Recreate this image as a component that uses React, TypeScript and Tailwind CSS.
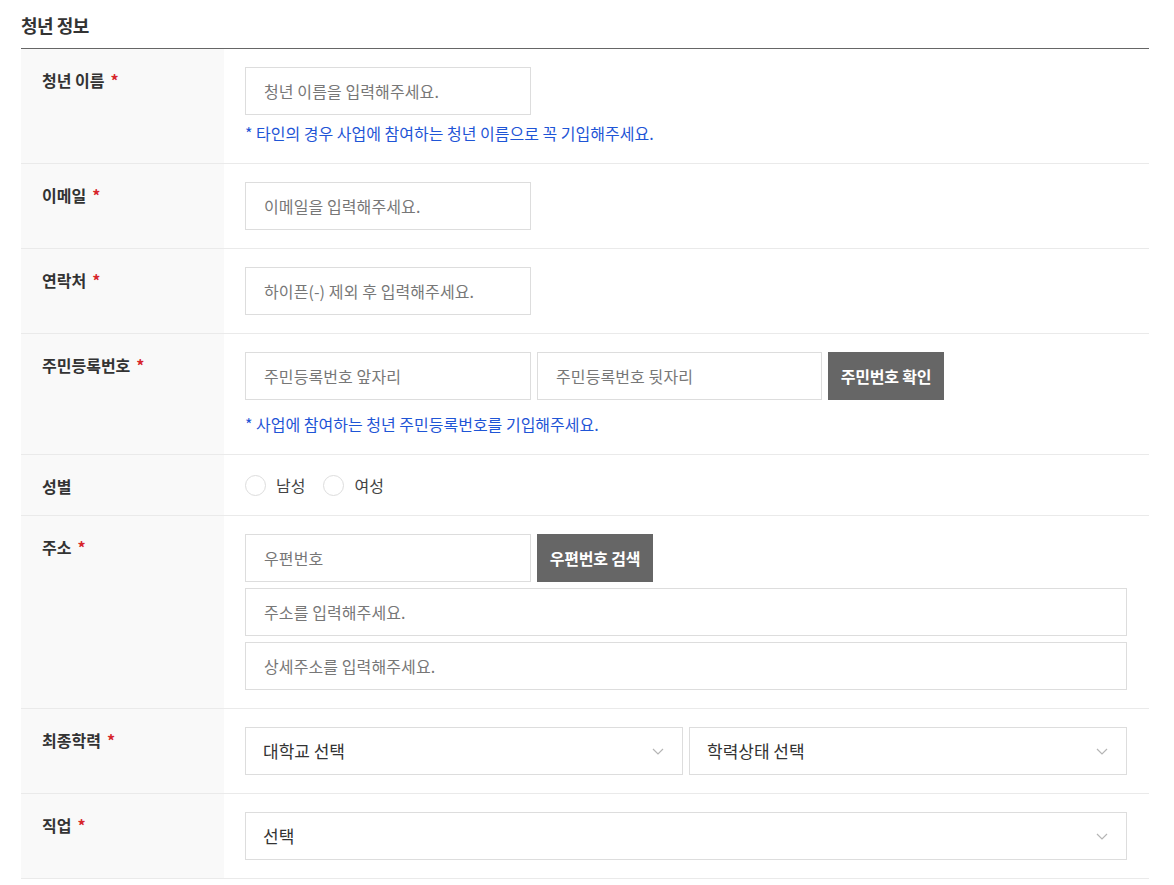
import type { ReactNode } from "react";

const font = { fontFamily: '"Noto Sans CJK KR", "Noto Sans", sans-serif' };

function Row({
  label,
  required,
  children,
}: {
  label: string;
  required?: boolean;
  children: ReactNode;
}) {
  return (
    <div className="flex border-b border-[#eaeaea]">
      <div className="w-[203px] shrink-0 bg-[#f9f9f9] pl-[21px] pt-[18px] text-[16px] font-bold leading-[26px] text-[#333]">
        {label}
        {required && <span className="ml-[6px] text-[#d7262c]">*</span>}
      </div>
      <div className="flex-1 py-[18px] pl-[21px] pr-[22px]">{children}</div>
    </div>
  );
}

function TextInput({ placeholder, className = "w-[286px]" }: { placeholder: string; className?: string }) {
  return (
    <input
      type="text"
      placeholder={placeholder}
      className={`${className} h-[48px] border border-[#dddddd] bg-white px-[18px] text-[16px] tracking-[0.1px] text-[#333] outline-none placeholder:text-[#777]`}
      style={font}
    />
  );
}

function Help({ children, className = "mt-[6px]" }: { children: ReactNode; className?: string }) {
  return <p className={`${className} text-[16px] leading-[24px] text-[#1f55d6]`}>{children}</p>;
}

function DarkButton({ children, className }: { children: ReactNode; className: string }) {
  return (
    <button
      type="button"
      className={`${className} h-[48px] shrink-0 bg-[#666666] text-[16px] font-bold tracking-[-0.2px] text-white`}
      style={font}
    >
      {children}
    </button>
  );
}

function SelectBox({ label }: { label: string }) {
  return (
    <div className="flex h-[48px] items-center justify-between border border-[#dddddd] bg-white pl-[17px] pr-[18px] text-[17px] text-[#333]">
      <span>{label}</span>
      <svg width="12" height="7" viewBox="0 0 12 7" fill="none">
        <path d="M1 1l5 5 5-5" stroke="#b5b5b5" strokeWidth="1.2" />
      </svg>
    </div>
  );
}

function Radio({ label }: { label: string }) {
  return (
    <label className="flex items-center gap-[10px]">
      <span className="h-[21px] w-[21px] rounded-full border border-[#dddddd] bg-white" />
      <span className="text-[16px] text-[#444]">{label}</span>
    </label>
  );
}

export default function App() {
  return (
    <div className="min-h-screen bg-white px-[21px] pt-[11px]" style={font}>
      <div className="w-[1128px]">
        <h2 className="pb-[9px] text-[18px] font-bold leading-[28px] tracking-[-0.5px] text-[#333]">청년 정보</h2>
        <div className="border-t border-[#666666]">
          <Row label="청년 이름" required>
            <TextInput placeholder="청년 이름을 입력해주세요." />
            <Help>* 타인의 경우 사업에 참여하는 청년 이름으로 꼭 기입해주세요.</Help>
          </Row>
          <Row label="이메일" required>
            <TextInput placeholder="이메일을 입력해주세요." />
          </Row>
          <Row label="연락처" required>
            <TextInput placeholder="하이픈(-) 제외 후 입력해주세요." />
          </Row>
          <Row label="주민등록번호" required>
            <div className="flex gap-[6px]">
              <TextInput placeholder="주민등록번호 앞자리" />
              <TextInput placeholder="주민등록번호 뒷자리" className="w-[285px]" />
              <DarkButton className="w-[116px]">주민번호 확인</DarkButton>
            </div>
            <Help className="mt-[12px]">* 사업에 참여하는 청년 주민등록번호를 기입해주세요.</Help>
          </Row>
          <Row label="성별">
            <div className="flex h-[24px] items-center gap-[18px]">
              <Radio label="남성" />
              <Radio label="여성" />
            </div>
          </Row>
          <Row label="주소" required>
            <div className="flex flex-col gap-[6px]">
              <div className="flex gap-[6px]">
                <TextInput placeholder="우편번호" />
                <DarkButton className="w-[116px]">우편번호 검색</DarkButton>
              </div>
              <TextInput placeholder="주소를 입력해주세요." className="w-full" />
              <TextInput placeholder="상세주소를 입력해주세요." className="w-full" />
            </div>
          </Row>
          <Row label="최종학력" required>
            <div className="grid grid-cols-2 gap-[6px]">
              <SelectBox label="대학교 선택" />
              <SelectBox label="학력상태 선택" />
            </div>
          </Row>
          <Row label="직업" required>
            <SelectBox label="선택" />
          </Row>
        </div>
      </div>
    </div>
  );
}
